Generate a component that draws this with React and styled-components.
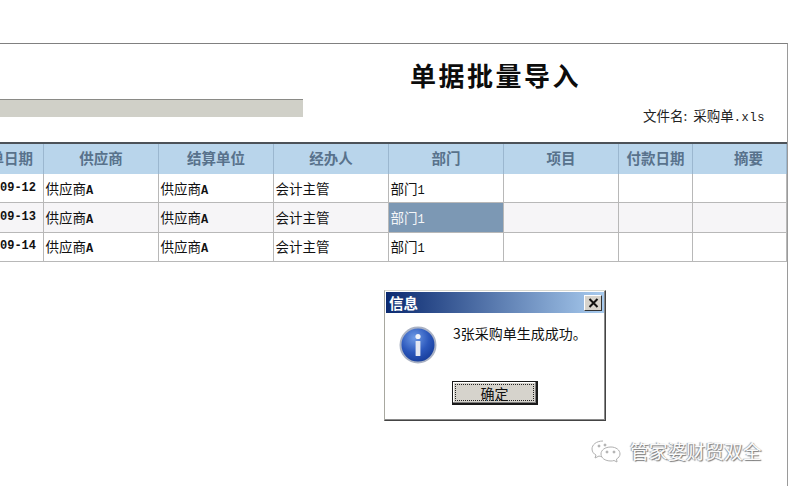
import React from 'react';
import styled, { createGlobalStyle } from 'styled-components';

const GlobalStyle = createGlobalStyle`
  html, body {
    margin: 0;
    padding: 0;
    background: #fff;
  }
`;

const Page = styled.div`
  position: relative;
  width: 788px;
  height: 486px;
  overflow: hidden;
  box-sizing: border-box;
  padding-top: 43px;
  background: #fff;
  font-family: "Liberation Serif", "Noto Sans CJK SC", serif;
  color: #111;
`;

const Content = styled.div`
  border-top: 1px solid #808080;
  border-right: 1px solid #9a9a9a;
  height: 443px;
  box-sizing: border-box;
`;

const TitleRow = styled.div`
  display: grid;
  grid-template-columns: 303px 1fr;
  height: 98px;
`;

const ProgressCol = styled.div`
  padding-top: 55px;
`;

const ProgressBar = styled.div`
  height: 18px;
  background: #d0d0c8;
  border-top: 1px solid #8a8a86;
  box-sizing: border-box;
`;

const TitleCol = styled.div`
  display: flex;
  flex-direction: column;
`;

const Title = styled.h1`
  margin: 13px 0 0 107px;
  font-family: "Noto Sans CJK SC", sans-serif;
  font-size: 26px;
  line-height: 36px;
  font-weight: 700;
  letter-spacing: 2.5px;
  color: #0c0c0c;
`;

const FileName = styled.div`
  margin: 13px 22px 0 0;
  text-align: right;
  font-size: 13.5px;
  line-height: 18px;
  font-family: "Noto Sans CJK SC", sans-serif;
  color: #222;

  span {
    font-family: "Liberation Mono", monospace;
    font-size: 12px;
    letter-spacing: 0.6px;
  }
`;

const Table = styled.div`
  display: grid;
  grid-template-columns: 44px 115px 115px 115px 115px 115px 74px 1fr;
  border-top: 2px solid #4c5258;
`;

const HeadCell = styled.div`
  height: 30px;
  box-sizing: border-box;
  display: flex;
  align-items: center;
  justify-content: ${(p) => (p.$clip ? 'flex-end' : 'center')};
  overflow: hidden;
  white-space: nowrap;
  padding-right: ${(p) => (p.$clip ? '10px' : '0')};
  padding-left: ${(p) => p.$shift || 0}px;
  padding-bottom: 3px;
  background: #b9d5eb;
  border-right: 1px solid #9bb7cf;
  font-family: "Noto Sans CJK SC", sans-serif;
  font-size: 14.5px;
  font-weight: 700;
  color: #58728c;
`;

const Cell = styled.div`
  height: ${(p) => (p.$row === 1 ? 30 : 29)}px;
  box-sizing: border-box;
  display: flex;
  align-items: center;
  justify-content: ${(p) => (p.$clip ? 'flex-end' : 'flex-start')};
  overflow: hidden;
  white-space: nowrap;
  padding-left: ${(p) => (p.$clip ? '0' : '1.5px')};
  padding-right: ${(p) => (p.$clip ? '7px' : '0')};
  padding-bottom: ${(p) => (p.$row === 0 ? 0 : 2)}px;
  background: ${(p) => (p.$selected ? '#7c98b4' : p.$row === 1 ? '#f6f5f7' : '#fff')};
  color: ${(p) => (p.$selected ? '#f4f6f8' : '#111')};
  border-right: 1px solid #b8b8b8;
  border-bottom: 1px solid #b8b8b8;
  font-family: "Noto Sans CJK SC", sans-serif;
  font-size: 13.5px;

  b, i {
    font-family: "Liberation Mono", monospace;
    font-size: 12px;
    font-style: normal;
  }

  b {
    font-weight: 700;
  }
`;

const Dialog = styled.div`
  position: absolute;
  left: 384px;
  top: 290px;
  width: 222px;
  height: 131px;
  box-sizing: border-box;
  padding: 1px;
  background: #fff;
  border: 1px solid #444;
  border-top-color: #d8d8d0;
  border-left-color: #a8a8a0;
  box-shadow: inset -1px -1px 0 #8a8a8a;
`;

const DialogBar = styled.div`
  height: 21px;
  box-sizing: border-box;
  display: flex;
  align-items: center;
  justify-content: space-between;
  padding: 0 2px 0 3px;
  background: linear-gradient(to right, #0b2a70, #a8cbee);
  color: #fff;
  font-family: "Noto Sans CJK SC", sans-serif;
  font-size: 14.5px;
  line-height: 17px;
  font-weight: 700;
`;

const CloseButton = styled.div`
  width: 18px;
  height: 16px;
  box-sizing: border-box;
  display: flex;
  align-items: center;
  justify-content: center;
  background: #d6d3cc;
  border: 1px solid;
  border-color: #fff #333 #333 #fff;
`;

const DialogBody = styled.div`
  display: flex;
  padding: 13px 0 0 13px;
  height: 43px;
`;

const Message = styled.div`
  margin: 0 0 0 16px;
  font-family: "Noto Sans CJK SC", sans-serif;
  font-size: 14px;
  line-height: 15px;
  color: #111;
`;

const DialogFooter = styled.div`
  display: flex;
  justify-content: center;
  margin-top: 12px;
`;

const OkButton = styled.div`
  width: 86px;
  height: 24px;
  box-sizing: border-box;
  border: 2px solid #1a1a1a;
  border-top-width: 1px;
  border-left-width: 1px;
  padding: 2px;
  background: #d6d3cc;
  box-shadow: inset -1px -1px 0 #808080, inset 1px 1px 0 #fff;
`;

const OkLabel = styled.div`
  height: 100%;
  display: flex;
  align-items: center;
  justify-content: center;
  border: 1px dotted #222;
  box-sizing: border-box;
  font-family: "Noto Sans CJK SC", sans-serif;
  font-size: 14px;
  color: #111;
`;

const Watermark = styled.div`
  position: absolute;
  left: 590px;
  top: 437px;
  display: flex;
  align-items: center;
  gap: 8px;
  font-family: "Noto Sans CJK SC", sans-serif;
  font-size: 18.8px;
  line-height: 28px;
  color: #fbfbfb;
  text-shadow: 1px 1px 1px #777, -1px 0 1px #999;
`;

const headers = ['单日期', '供应商', '结算单位', '经办人', '部门', '项目', '付款日期', '摘要'];
const days = ['-09-12', '-09-13', '-09-14'];

const InfoIcon = () => (
  <svg width="38" height="38" viewBox="0 0 38 38">
    <defs>
      <radialGradient id="infoFill" cx="40%" cy="30%" r="75%">
        <stop offset="0%" stopColor="#6f9be6" />
        <stop offset="55%" stopColor="#2c58bc" />
        <stop offset="100%" stopColor="#143a96" />
      </radialGradient>
    </defs>
    <circle cx="19" cy="19" r="17.5" fill="url(#infoFill)" stroke="#aab2c4" strokeWidth="2" />
    <circle cx="19" cy="10.5" r="2.6" fill="#f2f4fa" />
    <rect x="16.6" y="15" width="4.8" height="15" rx="0.6" fill="#e4e8f2" />
  </svg>
);

const CloseIcon = () => (
  <svg width="11" height="10" viewBox="0 0 11 10">
    <path d="M1.5 1 L9.5 9 M9.5 1 L1.5 9" stroke="#111" strokeWidth="2" />
  </svg>
);

const WechatIcon = () => (
  <svg width="32" height="26" viewBox="0 0 32 26" fill="none" stroke="#b0b0b0" strokeWidth="1">
    <path d="M13 3 C6 3 2 7 2 11 C2 14 4 16 6 17 L5 20 L9 18 C10 18.500 11 18.600 12 18.600" />
    <path d="M21 9 C15 9 11 12 11 16 C11 20 15 23 21 23 C22 23 23 22.800 24 22.500 L27 24 L26.500 21 C28.500 20 30 18 30 16 C30 12 26 9 21 9 Z" />
    <circle cx="17" cy="14" r="1" fill="#b0b0b0" />
    <circle cx="24" cy="14" r="1" fill="#b0b0b0" />
    <circle cx="9" cy="8" r="1" fill="#b0b0b0" />
    <circle cx="15" cy="7" r="1" fill="#b0b0b0" />
  </svg>
);

const App = () => {
  return (
    <>
      <GlobalStyle />
      <Page>
        <Content>
          <TitleRow>
            <ProgressCol>
              <ProgressBar />
            </ProgressCol>
            <TitleCol>
              <Title>单据批量导入</Title>
              <FileName>
                文件名:&nbsp;&nbsp;采购单<span>.xls</span>
              </FileName>
            </TitleCol>
          </TitleRow>
          <Table>
            {headers.map((h, i) => (
              <HeadCell key={h} $clip={i === 0} $shift={i === 7 ? 18 : 0}>
                {h}
              </HeadCell>
            ))}
            {days.map((day, row) => (
              <React.Fragment key={day}>
                <Cell $row={row} $clip>
                  <b>{day}</b>
                </Cell>
                <Cell $row={row}>
                  <span>供应商<b>A</b></span>
                </Cell>
                <Cell $row={row}>
                  <span>供应商<b>A</b></span>
                </Cell>
                <Cell $row={row}>会计主管</Cell>
                <Cell $row={row} $selected={row === 1}>
                  <span>部门<i>1</i></span>
                </Cell>
                <Cell $row={row} />
                <Cell $row={row} />
                <Cell $row={row} />
              </React.Fragment>
            ))}
          </Table>
        </Content>
        <Dialog>
          <DialogBar>
            信息
            <CloseButton>
              <CloseIcon />
            </CloseButton>
          </DialogBar>
          <DialogBody>
            <InfoIcon />
            <Message>3张采购单生成成功。</Message>
          </DialogBody>
          <DialogFooter>
            <OkButton>
              <OkLabel>确定</OkLabel>
            </OkButton>
          </DialogFooter>
        </Dialog>
        <Watermark>
          <WechatIcon />
          管家婆财贸双全
        </Watermark>
      </Page>
    </>
  );
};

export default App;
